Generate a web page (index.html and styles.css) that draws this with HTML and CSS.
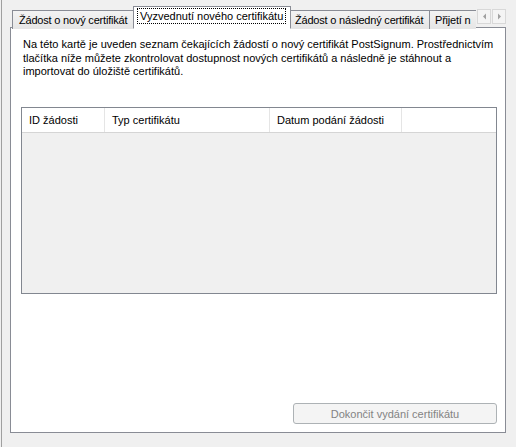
FILE: index.html
```html
<!DOCTYPE html>
<html>
<head>
<meta charset="utf-8">
<link rel="stylesheet" href="styles.css">
</head>
<body>
<div class="frame">
  <div class="tabstrip">
    <div class="tabs">
      <div class="tab t1">Žádost o nový certifikát</div>
      <div class="tab sel"><span class="focus">Vyzvednutí nového certifikátu</span></div>
      <div class="tab t3">Žádost o následný certifikát</div>
      <div class="tab t4">Přijetí n</div>
    </div>
    <div class="scroll">
      <div class="sbtn"><svg width="7" height="7" viewBox="0 0 7 7"><path d="M5 0.5 L2 3.5 L5 6.5 Z" fill="#a0a0a0"/></svg></div>
      <div class="sbtn"><svg width="7" height="7" viewBox="0 0 7 7"><path d="M2 0.5 L5 3.5 L2 6.5 Z" fill="#a0a0a0"/></svg></div>
    </div>
  </div>
  <div class="panel">
    <p class="desc">Na této kartě je uveden seznam čekajících žádostí o nový certifikát PostSignum. Prostřednictvím<br>tlačítka níže můžete zkontrolovat dostupnost nových certifikátů a následně je stáhnout a<br>importovat do úložiště certifikátů.</p>
    <div class="list">
      <div class="head">
        <div class="col c1">ID žádosti</div>
        <div class="col c2">Typ certifikátu</div>
        <div class="col c3">Datum podání žádosti</div>
        <div class="col c4"></div>
      </div>
      <div class="body"></div>
    </div>
    <div class="actions">
      <button class="btn" disabled>Dokončit vydání certifikátu</button>
    </div>
  </div>
</div>
</body>
</html>
```
FILE: styles.css
```css
html, body {
  margin: 0;
  padding: 0;
  background: #f0f0f0;
  width: 516px;
  height: 447px;
  overflow: hidden;
}
.frame {
  position: relative;
  margin-left: 1px;
  border-left: 1px solid #a0a0a0;
  height: 447px;
  padding: 6px 10px 0 8px;
  box-sizing: border-box;
  font-family: "Liberation Sans", Arial, sans-serif;
  font-size: 11px;
  color: #000;
}
.tabstrip {
  display: flex;
  height: 22px;
  align-items: flex-start;
  justify-content: space-between;
}
.tabs {
  display: flex;
  align-items: flex-end;
  height: 23px;
  width: 466px;
  overflow: hidden;
  position: relative;
  z-index: 2;
}
.tab {
  height: 19px;
  box-sizing: border-box;
  border: 1px solid #898c95;
  border-bottom: none;
  background: linear-gradient(#f3f3f3, #e5e5e5);
  padding: 3px 0 0 5px;
  white-space: nowrap;
  overflow: hidden;
  margin-left: -1px;
  flex: none;
  letter-spacing: -0.2px;
}
.t1 { margin-left: 2px; width: 123px; padding-left: 6px; }
.t3 { width: 142px; padding-left: 6px; }
.t4 { width: 60px; padding-left: 5px; }
.tab.sel {
  height: 23px;
  background: #fff;
  width: 158px;
  margin-left: -2px;
  margin-right: -2px;
  padding: 3px 0 0 4px;
  position: relative;
  z-index: 3;
  border-bottom: 1px solid #fff;
  overflow: visible;
  letter-spacing: 0;
}
.focus {
  outline: 1px dotted #000;
  padding: 1px 2px 1px 2px;
}
.scroll {
  display: flex;
  gap: 1px;
  margin-top: 3px;
}
.sbtn {
  width: 14px;
  height: 15px;
  box-sizing: border-box;
  border: 1px solid #d8d8d8;
  background: #f4f4f4;
  display: flex;
  align-items: center;
  justify-content: center;
}
.panel {
  border: 1px solid #898c95;
  background: #fff;
  height: 406px;
  box-sizing: border-box;
  padding: 0 8px 0 10px;
  display: flex;
  flex-direction: column;
  margin-top: -1px;
}
.desc {
  margin: 10px 0 0 2px;
  line-height: 13.5px;
  white-space: nowrap;
}
.list {
  margin-top: 28px;
  height: 187px;
  border: 1px solid #828790;
  box-sizing: border-box;
  display: flex;
  flex-direction: column;
}
.head {
  display: flex;
  height: 24px;
  border-bottom: 1px solid #d5d5d5;
  background: #fff;
  flex: none;
}
.col {
  box-sizing: border-box;
  border-right: 1px solid #e5e5e5;
  padding: 6px 0 0 7px;
  white-space: nowrap;
}
.c1 { width: 83px; }
.c2 { width: 165px; }
.c3 { width: 132px; }
.c4 { flex: 1; border-right: none; }
.body {
  flex: 1;
  background: #f0f0f0;
}
.actions {
  margin-top: auto;
  margin-bottom: 8px;
  display: flex;
  justify-content: flex-end;
}
.btn {
  width: 204px;
  height: 21px;
  border: 1px solid #adb2b5;
  border-radius: 3px;
  background: #f4f4f4;
  color: #838383;
  font-family: "Liberation Sans", Arial, sans-serif;
  font-size: 11px;
  padding: 0;
}
```
